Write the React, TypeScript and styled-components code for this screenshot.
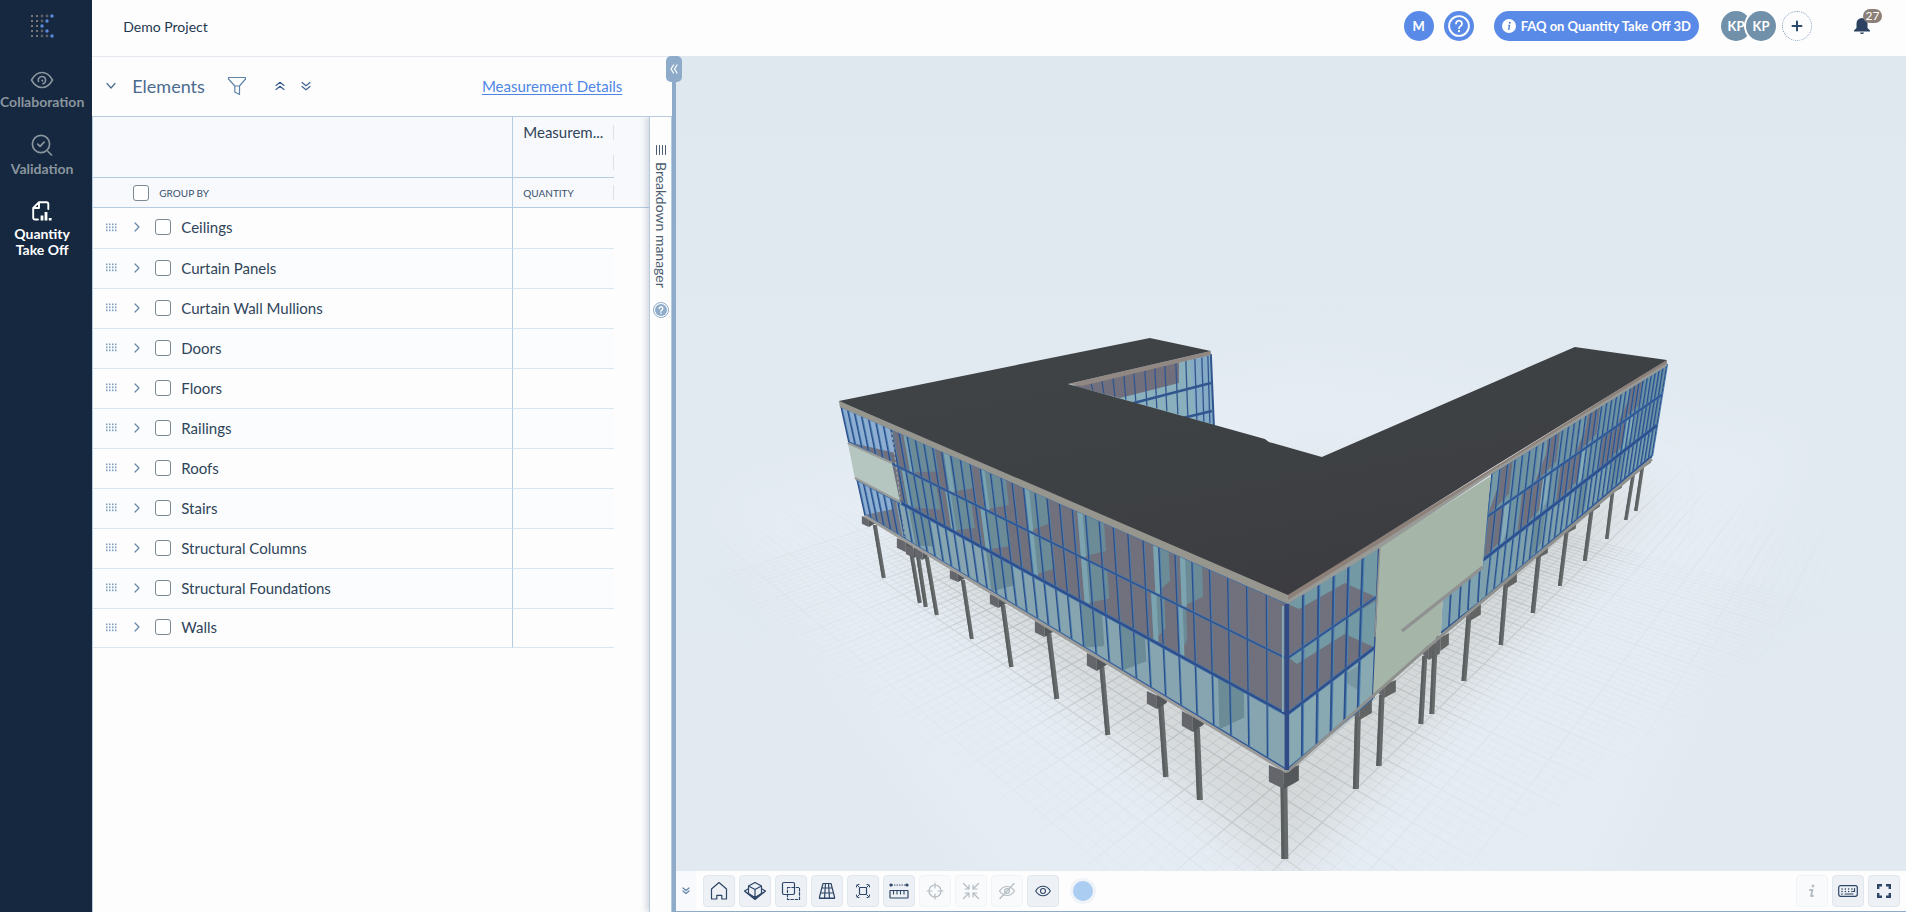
import React from "react";
import styled, { createGlobalStyle, css } from "styled-components";

const GlobalStyle = createGlobalStyle`
  *, *::before, *::after { box-sizing: border-box; }
  html, body, #root { height: 100%; }
  body {
    margin: 0;
    background: #fdfdfe;
    color: #2f4459;
    font-family: Lato, "Noto Sans", sans-serif;
    font-size: 15px;
  }
  button { font: inherit; color: inherit; padding: 0; border: 0; background: none; cursor: pointer; }
  svg { display: block; }
`;

/* ---------- shell ---------- */

const Shell = styled.div`
  display: flex;
  height: 100vh;
`;

const Sidebar = styled.nav`
  flex: 0 0 92px;
  display: flex;
  flex-direction: column;
  align-items: center;
  padding: 14px 8px 0 0;
  background: #152840;
`;

const NavLink = styled.a<{ $active?: boolean; $gap: number }>`
  display: flex;
  flex-direction: column;
  align-items: center;
  gap: 5px;
  margin-top: ${(p) => p.$gap}px;
  color: ${(p) => (p.$active ? "#ffffff" : "#8a959d")};
  font-size: 14px;
  font-weight: 700;
  line-height: 16px;
  text-align: center;
  text-decoration: none;
`;

const Main = styled.div`
  flex: 1;
  min-width: 0;
  display: flex;
  flex-direction: column;
`;

/* ---------- top bar ---------- */

const TopBar = styled.header`
  flex: 0 0 57px;
  display: flex;
  align-items: center;
  padding: 0 36px 4px 31px;
  border-bottom: 1px solid #e3e9ef;
`;

const ProjectName = styled.h1`
  flex: 1;
  margin: 0;
  font-size: 14px;
  font-weight: 400;
  color: #22384f;
`;

const RoundButton = styled.button`
  width: 30px;
  height: 30px;
  margin-right: 10px;
  display: grid;
  place-items: center;
  border-radius: 50%;
  background: #5a8ae8;
  color: #fff;
  font-size: 13px;
  font-weight: 700;
`;

const FaqButton = styled.button`
  display: flex;
  align-items: center;
  gap: 5px;
  height: 30px;
  margin: 0 22px 0 10px;
  padding: 0 8px;
  border-radius: 15px;
  background: #5a8ae8;
  color: #fff;
  font-size: 13px;
  font-weight: 700;
  white-space: nowrap;
`;

const Avatars = styled.div`
  display: flex;
  margin-right: 6px;
`;

const Avatar = styled.span`
  width: 30px;
  height: 30px;
  display: grid;
  place-items: center;
  border-radius: 50%;
  background: #7190a9;
  color: #fff;
  font-size: 13px;
  font-weight: 700;
  & + & {
    margin-left: -5px;
    box-shadow: 0 0 0 2px #fff;
  }
`;

const AddButton = styled.button`
  width: 30px;
  height: 30px;
  display: grid;
  place-items: center;
  border: 1px dotted #7f9cb8;
  border-radius: 50%;
`;

const BellButton = styled.button`
  position: relative;
  width: 16px;
  height: 18px;
  margin-left: 42px;
`;

const BellBadge = styled.span`
  position: absolute;
  top: -8px;
  left: 9px;
  width: 19px;
  border-radius: 7px;
  background: #8b7f77;
  color: #fff;
  font-size: 12px;
  line-height: 14px;
  text-align: center;
`;

/* ---------- elements panel ---------- */

const Workspace = styled.div`
  flex: 1;
  min-height: 0;
  display: flex;
`;

const Panel = styled.section`
  flex: 0 0 580px;
  display: flex;
  flex-direction: column;
`;

const PanelHead = styled.div`
  display: flex;
  align-items: center;
  height: 60px;
  padding: 0 50px 2px 13px;
  border-bottom: 1px solid #b4cbe0;
`;

const PanelTitle = styled.h2`
  margin: 0 22px 0 15px;
  font-size: 18px;
  font-weight: 400;
  color: #4b6b8e;
`;

const IconButton = styled.button<{ $gap?: number }>`
  margin-left: ${(p) => p.$gap ?? 0}px;
`;

const DetailsLink = styled.a`
  margin-left: auto;
  color: #4f86e6;
  font-size: 15px;
  text-underline-offset: 2px;
`;

const PanelBody = styled.div`
  flex: 1;
  display: flex;
`;

const TableArea = styled.div`
  flex: 1;
  min-width: 0;
  border-left: 1px solid #b4cbe0;
`;

const Table = styled.table`
  width: 100%;
  table-layout: fixed;
  border-collapse: separate;
  border-spacing: 0;
  col:nth-child(1) { width: 420px; }
  col:nth-child(2) { width: 101px; }
`;

const HeadRow = styled.tr<{ $tall?: boolean }>`
  height: ${(p) => (p.$tall ? 61 : 30)}px;
  background: #f7f9fc;
  th {
    padding: 0;
    border-bottom: 1px solid #b4cbe0;
    font-weight: 400;
    text-align: left;
    vertical-align: top;
  }
  th:first-child { border-right: 1px solid #b4cbe0; }
  ${(p) => p.$tall && css`th:last-child { border-bottom: 0; }`}
`;

const HeadCell = styled.div<{ $small?: boolean }>`
  display: flex;
  align-items: center;
  height: ${(p) => (p.$small ? 29 : 30)}px;
  padding-left: 10px;
  font-size: ${(p) => (p.$small ? 10 : 15)}px;
  color: ${(p) => (p.$small ? "#37506b" : "#2f4459")};
  &::after {
    content: "";
    width: 1px;
    height: 15px;
    margin-left: auto;
    background: #dce2e8;
  }
`;

const GroupByLabel = styled.label`
  display: flex;
  align-items: center;
  gap: 10px;
  height: 29px;
  padding-left: 40px;
  font-size: 10px;
  color: #37506b;
`;

const CheckBox = styled.input.attrs({ type: "checkbox" })`
  appearance: none;
  width: 16px;
  height: 16px;
  margin: 0;
  border: 1px solid #7b8993;
  border-radius: 3px;
  background: #fff;
`;

const ElementRow = styled.tr`
  height: 40px;
  &:first-child { height: 41px; }
  &:last-child { height: 39px; }
  &:nth-child(even) td:not(:last-child) { background: #fafcfd; }
  td { padding: 0 0 2px; }
  td:not(:last-child) { border-bottom: 1px solid #d8e6f0; }
  td:first-child { border-right: 1px solid #b4cbe0; }
`;

const RowContent = styled.div`
  display: flex;
  align-items: center;
  padding-left: 13px;
`;

const RowLabel = styled.label`
  display: flex;
  align-items: center;
  gap: 10px;
  margin-left: 15px;
  line-height: 20px;
`;

const Dock = styled.aside`
  position: relative;
  flex: 0 0 23px;
  display: flex;
  flex-direction: column;
  align-items: center;
  padding-top: 28px;
  border: solid #b4cbe0;
  border-width: 0 1px;
  background: #fdfdfe;
  box-shadow: -3px 0 6px rgba(90, 110, 130, 0.25);
  clip-path: inset(0 0 0 -12px);
`;

const DockLabel = styled.span`
  writing-mode: vertical-rl;
  margin: 7px 0 14px;
  font-size: 14px;
  line-height: 20px;
  color: #4a5c6e;
`;

const Splitter = styled.div`
  position: relative;
  flex: 0 0 4px;
  background: #8eacc9;
`;

const CollapseButton = styled.button`
  position: absolute;
  z-index: 1;
  top: -1px;
  left: -6px;
  width: 16px;
  height: 26px;
  display: grid;
  place-items: center;
  border-radius: 5px;
  background: #8eacc9;
`;

/* ---------- viewer ---------- */

const Viewer = styled.section`
  flex: 1;
  min-width: 0;
  display: flex;
  flex-direction: column;
`;

const Canvas = styled.div`
  flex: 1;
  min-height: 0;
  overflow: hidden;
  background: #e1e9f0;
  svg { width: 100%; height: 100%; }
`;

const ToolBar = styled.div`
  flex: 0 0 41px;
  display: flex;
  align-items: center;
  gap: 4px;
  padding-right: 6px;
  border-bottom: 1px solid #8eacc9;
  background: #fdfdfe;
`;

const ToolBarToggle = styled.button`
  align-self: stretch;
  width: 20px;
  margin-right: 3px;
  display: grid;
  place-items: center;
  background: #f7f9fc;
`;

const ToolButton = styled.button`
  width: 32px;
  height: 32px;
  display: grid;
  place-items: center;
  border: 1px solid #e0e7ed;
  border-radius: 4px;
  background: #edf1f5;
  color: #2d4566;
  &:disabled {
    border-color: #f1f4f7;
    background: #f9fafc;
    color: #b3bcc2;
  }
`;

const ColorButton = styled.button`
  width: 26px;
  height: 26px;
  margin: 0 auto 0 7px;
  border: 3px solid #f0f4f8;
  border-radius: 50%;
  background: #abcdf2;
`;

/* ---------- icons ---------- */

type IconProps = { w: number; h?: number; stroke?: string; sw?: number; children: React.ReactNode };
const Icon = ({ w, h = w, stroke = "currentColor", sw = 1.2, children }: IconProps) => (
  <svg width={w} height={h} viewBox={`0 0 ${w} ${h}`} fill="none" stroke={stroke} strokeWidth={sw} strokeLinecap="round" strokeLinejoin="round" aria-hidden="true">
    {children}
  </svg>
);

const Logo = () => (
  <svg width="24" height="24" viewBox="0 0 24 24" aria-label="Home">
    {[0, 1, 2, 3, 4].map((r) =>
      [0, 1, 2, 3, 4].map((c) => {
        const edge = [4, 3, 2, 3, 4][r];
        if (c > edge) return null;
        const fill = c === edge ? "#5a8ad8" : c < 2 ? "#9b9188" : "#5c6068";
        return <circle key={`${r}${c}`} cx={2 + c * 5} cy={2 + r * 5} r={c === edge ? 1.7 : c < 2 ? 1 : 1.4} fill={fill} />;
      })
    )}
  </svg>
);

const EyeNav = () => (
  <Icon w={24} h={18} sw={1.6}>
    <path d="M1.500 9C4 4.500 7.700 1.500 12 1.500S20 4.500 22.500 9C20 13.500 16.300 16.500 12 16.500S4 13.500 1.500 9Z" />
    <path d="M8.500 10.500a3.700 3.700 0 1 1 4.500 2.200M12 9.300l.6.600" />
  </Icon>
);

const ValidationNav = () => (
  <Icon w={22} h={22} sw={1.7}>
    <circle cx="10" cy="10" r="8.600" />
    <path d="m17 17.500 3.500 3.500M6.800 10.200l2.300 2.200 4-4.200" />
  </Icon>
);

const TakeOffNav = () => (
  <Icon w={20} h={20} sw={1.9}>
    <path d="M6 18.500H3a1.800 1.800 0 0 1-1.800-1.800V7L7 1.200h7.500A1.800 1.800 0 0 1 16.300 3v5M7 1.500V7H1.500" />
    <path d="M10 14.500v5M14 11v8.500M18.200 17v2.500" strokeWidth="2.800" strokeLinecap="butt" />
  </Icon>
);

const DragDots = () => (
  <svg width="11" height="9" viewBox="0 0 11 9" fill="#7f9fbe" aria-hidden="true">
    {[0, 1, 2].map((r) => [0, 1, 2, 3].map((c) => <rect key={`${r}${c}`} x={c * 3} y={r * 3 + 0.5} width="1.500" height="1.700" />))}
  </svg>
);

const DoubleDown = ({ c = "#3f6290", s = 10 }: { c?: string; s?: number }) => (
  <Icon w={s} stroke={c}>
    <path d={s === 10 ? "m1 1.500 4 3.200 4-3.200M1 5.500l4 3.200 4-3.200" : "m1 1 3 2.500L7 1M1 4l3 2.500L7 4"} />
  </Icon>
);

const HelpRing = ({ d }: { d: number }) => (
  <svg width={d} height={d} viewBox="0 0 20 20" aria-hidden="true">
    <circle cx="10" cy="10" r="9" fill="none" stroke="#fff" strokeWidth="1.700" />
    <path d="M7.300 7.800a2.700 2.700 0 1 1 4.100 2.300c-.9.600-1.400 1-1.400 2" fill="none" stroke="#fff" strokeWidth="1.600" strokeLinecap="round" />
    <circle cx="10" cy="14.700" r="1" fill="#fff" />
  </svg>
);

/* ---------- building model ---------- */

type Pt = [number, number];
const pts = (list: Pt[]) => list.map((p) => p.map((n) => n.toFixed(1)).join(",")).join(" ");
const mix = (a: Pt, b: Pt, t: number): Pt => [a[0] + (b[0] - a[0]) * t, a[1] + (b[1] - a[1]) * t];

type Patch = { f: number; a: number; b: number; c: string; slope?: number };
type FaceProps = {
  tl: Pt; tr: Pt; br: Pt; bl: Pt;
  stops: number[];
  base: [string, string, string];
  patches?: Patch[];
  pane: number;
  children?: React.ReactNode;
};

/* A curtain-wall face: three glazed floors, interior patches, then mullions at the given stops. */
const Face = ({ tl, tr, br, bl, stops, base, patches = [], pane, children }: FaceProps) => {
  const at = (t: number, v: number): Pt => mix(mix(tl, tr, t), mix(bl, br, t), v);
  return (
    <g>
      {base.map((c, f) => (
        <polygon key={f} points={pts([at(0, f / 3), at(1, f / 3), at(1, (f + 1) / 3), at(0, (f + 1) / 3)])} fill={c} />
      ))}
      {patches.map((p, i) => (
        <polygon
          key={i}
          points={pts([at(p.a, p.f / 3), at(p.b, p.f / 3), at(p.b, (p.f + 1 - (p.slope ?? 0)) / 3), at(p.a, (p.f + 1) / 3)])}
          fill={p.c}
        />
      ))}
      {children}
      {stops.map((t, i) => {
        const p = at(t, 0);
        const q = at(t, 1);
        return (
          <g key={i}>
            <line x1={p[0] + pane * 0.7} y1={p[1]} x2={q[0] + pane * 0.7} y2={q[1]} stroke="#4b83b3" strokeWidth={pane * 0.8} />
            <line x1={p[0]} y1={p[1]} x2={q[0]} y2={q[1]} stroke="#2d4f8c" strokeWidth={pane} />
          </g>
        );
      })}
      {[0, 1 / 3, 2 / 3, 1].map((v, i) => {
        const p = at(0, v);
        const q = at(1, v);
        return (
          <g key={i}>
            <line x1={p[0]} y1={p[1]} x2={q[0]} y2={q[1]} stroke="#3f73ab" strokeWidth={i === 2 ? 3.6 : 2.6} />
            <line x1={p[0]} y1={p[1]} x2={q[0]} y2={q[1]} stroke="#2f4d8a" strokeWidth={i === 2 ? 2.2 : 1.2} />
          </g>
        );
      })}
    </g>
  );
};

/* Mullion stops whose spacing shrinks with distance from the near edge. */
const stopsFrom = (length: number, near: number, far: number, fromEnd: boolean) => {
  const out: number[] = [0];
  let d = 0;
  while (d < length) {
    const k = Math.sqrt(near) + (Math.sqrt(far) - Math.sqrt(near)) * (d / length);
    d += k * k;
    if (d < length - far / 2) out.push(d / length);
  }
  out.push(1);
  return fromEnd ? out.map((t) => 1 - t).reverse() : out;
};

const leftStops = stopsFrom(445, 20.5, 6.5, true);
const cornerStops = stopsFrom(92, 16, 13.5, false);
const rightStops = stopsFrom(174, 8, 3.6, false);

const TEAL = "#6b8c97";
const PALE = "#7ba3b0";
const SKY = "#8baed2";
const FLOOR = "#70717d";

/* Rooms seen through the glass: a shaded wall, then a pale partition edge. */
const rooms = (f: number, list: [number, number][]): Patch[] =>
  list.flatMap(([a, b]) => [
    { f, a, b, c: TEAL, slope: 0.4 },
    { f, a, b: a + 0.012, c: PALE, slope: 0.05 },
  ]);
const leftPatches: Patch[] = [
  { f: 0, a: 0, b: 0.11, c: SKY, slope: 0.35 },
  { f: 2, a: 0, b: 0.09, c: "#747985" },
  { f: 2, a: 0, b: 0.08, c: SKY, slope: 0.7 },
  { f: 2, a: 0.12, b: 0.17, c: TEAL, slope: 0.3 },
  { f: 2, a: 0.3, b: 0.36, c: TEAL, slope: 0.5 },
  { f: 2, a: 0.52, b: 0.57, c: TEAL, slope: 0.3 },
  { f: 2, a: 0.61, b: 0.67, c: TEAL, slope: 0.5 },
  { f: 2, a: 0.84, b: 0.9, c: TEAL, slope: 0.5 },
  ...rooms(0, [[0.14, 0.21], [0.23, 0.29], [0.31, 0.37], [0.41, 0.46], [0.53, 0.59], [0.7, 0.735], [0.76, 0.81]]),
  ...rooms(1, [[0.12, 0.2], [0.22, 0.28], [0.3, 0.36], [0.41, 0.46], [0.53, 0.59], [0.69, 0.72], [0.75, 0.77]]),
];
const rightPatches: Patch[] = [
  ...[0.0, 0.27, 0.5, 0.74].map((a) => ({ f: 0, a, b: a + 0.12, c: FLOOR, slope: 0.2 })),
  ...[0.0, 0.2, 0.42, 0.66].map((a) => ({ f: 1, a, b: a + 0.13, c: FLOOR, slope: 0.2 })),
  ...[0.0, 0.27, 0.5, 0.74].map((a) => ({ f: 0, a, b: a + 0.13, c: "#7599a5", slope: 0.6 })).map((p) => ({ ...p, b: p.a + 0.05 })),
  ...[0.1, 0.32, 0.54, 0.8].map((a) => ({ f: 1, a, b: a + 0.04, c: "#85abb8", slope: 0.3 })),
  ...[0.3, 0.55, 0.75].map((a) => ({ f: 2, a, b: a + 0.06, c: TEAL, slope: 0.2 })),
];

/* Each column: cap box (x1, y1, x2, y2), then post top, post foot and width. */
const leftColumns: number[][] = [
  [862, 516, 876, 527, 875, 525, 884, 578, 4], [897, 538, 914, 552, 911, 550, 920, 603, 4],
  [906, 545, 922, 558, 918, 555, 926, 607, 4], [915, 546, 930, 560, 927, 557, 937, 615, 4],
  [950, 570, 966, 582, 963, 580, 972, 639, 4], [990, 594, 1007, 608, 1003, 605, 1011.5, 667, 4.5],
  [1035, 621, 1054, 637, 1049, 634, 1057, 699, 5], [1087, 653, 1107, 671, 1102, 667, 1108, 735, 5],
  [1147, 691, 1167, 709, 1161, 705, 1166, 777, 5.5], [1182, 711, 1204, 732, 1197, 728, 1200, 800, 6],
  [1269, 765, 1299, 789, 1284, 784, 1285, 859, 7],
];
const rightColumns: number[][] = [
  [1353, 700, 1372, 720, 1358, 716, 1356, 789, 6], [1378, 680, 1396, 698, 1382, 695, 1379, 766, 5.5],
  [1423, 641, 1440, 660, 1425, 656, 1421, 724, 5], [1436, 633, 1449, 651, 1435, 650, 1432, 714, 5],
  [1464, 602, 1481, 621, 1469, 617, 1464, 681, 5], [1502, 571, 1517, 588, 1506, 584, 1501, 645, 4.5],
  [1533, 544, 1548, 558, 1539, 555, 1533, 613, 4.5], [1563, 520, 1576, 533, 1567, 530, 1560, 586, 4],
  [1590, 498, 1600, 511, 1592, 508, 1585, 561, 4], [1611, 480, 1622, 492, 1613, 490, 1607, 539, 3.5],
  [1632, 462, 1642, 474, 1634, 471, 1626, 520, 3.5], [1641, 455, 1651, 467, 1643, 464, 1636, 511, 3.5],
];

const Column = ({ c, right }: { c: number[]; right?: boolean }) => {
  const [x1, y1, x2, y2, px, py, fx, fy, w] = c;
  const h = y2 - y1;
  const mid = right ? x1 + (x2 - x1) * 0.35 : x1 + (x2 - x1) * 0.5;
  return (
    <g>
      <line x1={px} y1={py} x2={fx} y2={fy} stroke="#666a6a" strokeWidth={w} />
      <line x1={px - w / 4} y1={py} x2={fx - w / 4} y2={fy} stroke="#585d5f" strokeWidth={w / 2.5} />
      <polygon points={pts([[x1, y1], [mid, y1 + h * 0.25], [mid, y2], [x1, y2 - h * 0.3]])} fill="#65656c" />
      <polygon points={pts([[mid, y1 + h * 0.25], [x2, y1], [x2, y2 - h * 0.35], [mid, y2]])} fill={right ? "#616463" : "#55585a"} />
    </g>
  );
};

const HORIZON = 155;
const gridLines = (vx: number) =>
  Array.from({ length: 150 }, (_, i) => {
    const x = 1285 + (i - 75) * 19;
    const end = mix([vx, HORIZON], [x, 859], 1.15);
    const start = mix([vx, HORIZON], [x, 859], 0.3);
    return <line key={i} x1={start[0]} y1={start[1]} x2={end[0]} y2={end[1]} strokeWidth={i % 5 === 0 ? 1.3 : 0.7} />;
  });

const Building = () => (
  <svg viewBox="676 57 1230 814" preserveAspectRatio="xMidYMid slice" role="img" aria-label="3D model of the building">
    <defs>
      <filter id="soft" x="-30%" y="-30%" width="160%" height="160%"><feGaussianBlur stdDeviation="24" /></filter>
      <linearGradient id="sky" x1="0" y1="0" x2="0" y2="1">
        <stop offset="0" stopColor="#e0e8ef" />
        <stop offset="0.400" stopColor="#e2eaf1" />
        <stop offset="1" stopColor="#e2e9f1" />
      </linearGradient>
      <linearGradient id="roof" x1="0" y1="0" x2="0.600" y2="1">
        <stop offset="0" stopColor="#404446" />
        <stop offset="0.550" stopColor="#3e4144" />
        <stop offset="1" stopColor="#3c3c40" />
      </linearGradient>
      <mask id="gridFade" maskUnits="userSpaceOnUse" x="676" y="57" width="1230" height="814">
        <polygon points="700,560 1285,1000 1860,560 1660,480 870,500" fill="#1c1c1c" filter="url(#soft)" />
        <polygon points="870,560 1285,880 1660,500 1300,560" fill="#c4c4c4" filter="url(#soft)" />
      </mask>
    </defs>
    <rect x="676" y="57" width="1230" height="814" fill="url(#sky)" />
    <polygon points="720,500 1000,900 1600,900 1800,440 1300,360" fill="#e5ecf3" filter="url(#soft)" />
    <polygon points="900,540 1285,870 1650,490 1300,480" fill="#d4d8d9" filter="url(#soft)" />
    <g stroke="#b4babd" mask="url(#gridFade)">
      {gridLines(268)}
      {gridLines(2004)}
    </g>

    {leftColumns.map((c, i) => <Column key={i} c={c} />)}
    {rightColumns.map((c, i) => <Column key={i} c={c} right />)}

    {/* courtyard glazing */}
    <polygon points="1070,386 1211,354 1214,428" fill="#8bb0bd" />
    <polygon points="1074,386 1179,362 1179,383 1120,398" fill="#706f7b" />
    <polygon points="1190,359 1211,354 1213,428 1196,420" fill="#84aac6" />
    <g stroke="#31568f" strokeWidth="1.300">
      {[1091, 1102, 1113, 1124, 1134, 1145, 1155, 1165, 1176, 1186, 1195, 1202, 1208].map((x) => (
        <line key={x} x1={x} y1={386 - (x - 1075) * 0.225} x2={x + 2} y2={384 + (x - 1068) * 0.281} />
      ))}
      <path d="M1130 404 1211 383M1183 418 1212 411" strokeWidth="2.400" />
      <path d="M1211 354 1214 425" strokeWidth="2" />
    </g>

    {/* long left facade */}
    <Face tl={[841, 406]} tr={[1287, 603]} br={[1287, 770]} bl={[865, 515]} stops={leftStops} base={[FLOOR, FLOOR, "#86a5b0"]} patches={leftPatches} pane={1.3} />
    <polygon points="848,443 892,463 900,501 855,478" fill="#b5c6c1" />
    <path d="M848 443 892 463M855 478 900 502" stroke="#9a9c99" strokeWidth="2" fill="none" />
    <path d="M892 432 905 537" stroke="#9aa4a8" strokeWidth="1.200" strokeDasharray="3 2" />

    {/* short facade at the near corner */}
    <Face tl={[1287, 603]} tr={[1379, 546]} br={[1373, 698]} bl={[1287, 770]} stops={cornerStops} base={[FLOOR, FLOOR, "#88a8b2"]} pane={1.8}>
      <polygon points="1288,604 1345,568 1345,583 1299,609" fill="#7299a4" />
      <polygon points="1345,568 1379,546 1376,597 1345,583" fill="#7299a4" />
      <polygon points="1288,657 1345,620 1345,634 1297,664" fill="#7299a4" />
      <polygon points="1345,620 1377,600 1374,647 1345,634" fill="#7299a4" />
      <polygon points="1345,674 1360,665 1358,690 1345,682" fill="#7798a3" />
    </Face>

    {/* far right facade */}
    <Face tl={[1492, 473]} tr={[1667, 364]} br={[1652, 456]} bl={[1478, 604]} stops={rightStops} base={["#6f93a0", "#6f93a0", "#7da0ac"]} patches={rightPatches} pane={1.2} />
    <polygon points="1443,597 1484,565 1480,602 1441,633" fill="#7fa2b1" />
    <g stroke="#2f5690" strokeWidth="1.800">
      <path d="M1451 591l-2 36M1461 584l-2 34M1470 576l-2 34M1480 569l-2 33M1441 633 1480 602" />
    </g>

    <polygon points="1380,547 1491,476 1483,566 1443,597 1441,633 1373,698" fill="#a5b5a8" />
    <path d="M1402 631 1483 567" stroke="#8f9290" strokeWidth="3.500" fill="none" />
    <path d="M1380 547 1375 637" stroke="#8f9290" strokeWidth="1.500" fill="none" />

    {/* slab edges */}
    <path d="M865 516 1287 772" stroke="#9c9d9b" strokeWidth="3" fill="none" />
    <path d="M1287 772 1441 636 1652 459" stroke="#8f918e" strokeWidth="3" fill="none" />
    <path d="M1287 604V770" stroke="#2f4a86" strokeWidth="4.500" />
    <path d="M1283 606V712" stroke="#86aebb" strokeWidth="1.800" />

    {/* roof */}
    <polygon points="839,401 1288,594 1288,604 840,407" fill="#96968f" />
    <polygon points="1288,594 1380,538 1490,470 1667,360 1667,366 1492,474 1380,548 1288,604" fill="#979a97" />
    <polygon points="1288,594 1380,538 1490,470 1667,360 1667,363 1492,471 1380,543 1288,600" fill="#8d8078" />
    <polygon points="1068,384 1211,351 1211,355 1082,386" fill="#918883" />
    <polygon points="839,401 1150,338 1211,351 1068,384 1265,439 1269,442 1322,457 1575,347 1667,360 1490,469 1380,538 1288,595" fill="url(#roof)" />
  </svg>
);

/* ---------- page ---------- */

const groups = [
  "Ceilings", "Curtain Panels", "Curtain Wall Mullions", "Doors", "Floors", "Railings",
  "Roofs", "Stairs", "Structural Columns", "Structural Foundations", "Walls",
];

type Tool = { name: string; disabled?: boolean; icon: React.ReactNode };
const tools: Tool[] = [
  { name: "Home", icon: <Icon w={20}><path d="M2.500 8 10 1.500 17.500 8v10H12.800v-3.600h-5V18H2.500Z" /></Icon> },
  { name: "Rotate", icon: <Icon w={24} h={20}><path d="m12 1.500 6.500 3.500v7.500L12 16.500 5.500 12.500V5ZM5.500 5 12 8.500 18.500 5M12 8.500v8" /><path d="M5 8 1.500 10 12 17.500 22.500 10 19 8M2 10.500 12 18.500 22 10.500" /></Icon> },
  { name: "Selection", icon: <Icon w={20}><rect x="1.500" y="1.500" width="12" height="12" rx="1.500" /><path d="M6.500 6.500h12v12h-12Z" strokeDasharray="2.500 1.800" /></Icon> },
  { name: "Perspective", icon: <Icon w={18}><path d="M5 1.500h8L16.500 15v1.500H1.500V15ZM3.800 6h10.400M2.500 11h13M7.500 1.500 6.500 16.500M10.500 1.500l1 15M1.500 16h15" /></Icon> },
  { name: "Fit", icon: <Icon w={16}><rect x="4.500" y="4.500" width="7" height="7" rx="0.500" /><path d="M1.500 4V2.800M4 1.500H2.800M2 2l1.800 1.800M12 1.500h1.200M14.500 4V2.800M14 2l-1.800 1.800M1.500 12v1.200M4 14.500H2.800M2 14l1.800-1.800M14.500 12v1.200M12 14.500h1.200M14 14l-1.800-1.800" strokeWidth="1" /></Icon> },
  { name: "Measure", icon: <Icon w={20} h={16}><rect x="1" y="7.500" width="18" height="7.500" rx="0.500" /><path d="M4.500 8v3M8 8v3M11.500 8v3M15 8v3" strokeWidth="1.100" /><path d="M3 2h14" strokeDasharray="0.500 2" /><circle cx="2" cy="2" r="1" fill="currentColor" /><circle cx="18" cy="2" r="1" fill="currentColor" /></Icon> },
  { name: "Focus", disabled: true, icon: <Icon w={18}><circle cx="9" cy="9" r="6" /><path d="M9 1v5M9 12v5M1 9h5M12 9h5" /></Icon> },
  { name: "Collapse", disabled: true, icon: <Icon w={18}><path d="m1.500 1.500 5.500 5.500M7 3v4H3M16.500 1.500 11 7M11 3v4h4M1.500 16.500 7 11M3 11h4v4M16.500 16.500 11 11M15 11h-4v4" /></Icon> },
  { name: "Hide", disabled: true, icon: <Icon w={18}><path d="M1.500 9C3.500 6 6 4.500 9 4.500S14.500 6 16.500 9C14.500 12 12 13.500 9 13.500S3.500 12 1.500 9Z" /><circle cx="9" cy="9" r="2.300" /><path d="M16 1.500 2 16.500" /></Icon> },
  { name: "Show", icon: <Icon w={16} h={12} sw={1.1}><path d="M.7 6C2.500 2.800 5 1.300 8 1.300S13.500 2.800 15.300 6C13.500 9.200 11 10.700 8 10.700S2.500 9.200.7 6Z" /><circle cx="8" cy="6" r="2.500" /></Icon> },
];

const viewTools: Tool[] = [
  { name: "Information", disabled: true, icon: <Icon w={8} h={14}><circle cx="5" cy="2" r="0.800" fill="currentColor" /><path d="M2 6h2.500L3 12h2" strokeWidth="1.800" /></Icon> },
  { name: "Keyboard shortcuts", icon: <Icon w={20} h={12}><rect x="0.700" y="0.700" width="18.600" height="10.600" rx="2" /><path d="M4 4h10M4 6.500h10" strokeDasharray="0.100 3.200" strokeWidth="1.500" /><path d="M3.500 9h1M7 9h8M16.500 3.500v3h-1.500" strokeWidth="1.200" /></Icon> },
  { name: "Full screen", icon: <Icon w={14} sw={2.4}><path d="M1.200 5V1.200H5M9 1.200h3.800V5M12.800 9v3.800H9M5 12.800H1.200V9" strokeLinecap="butt" strokeLinejoin="miter" /></Icon> },
];

const ToolSet = ({ items }: { items: Tool[] }) => (
  <>
    {items.map((t) => (
      <ToolButton key={t.name} aria-label={t.name} disabled={t.disabled}>{t.icon}</ToolButton>
    ))}
  </>
);

export default function App() {
  return (
    <>
      <GlobalStyle />
      <Shell>
        <Sidebar>
          <Logo />
          <NavLink href="#collaboration" $gap={33}><EyeNav />Collaboration</NavLink>
          <NavLink href="#validation" $gap={24}><ValidationNav />Validation</NavLink>
          <NavLink href="#take-off" $gap={24} $active><TakeOffNav /><span>Quantity<br />Take Off</span></NavLink>
        </Sidebar>
        <Main>
          <TopBar>
            <ProjectName>Demo Project</ProjectName>
            <RoundButton aria-label="M profile">M</RoundButton>
            <RoundButton aria-label="Help"><HelpRing d={22} /></RoundButton>
            <FaqButton>
              <svg width="14" height="14" viewBox="0 0 14 14" aria-hidden="true">
                <circle cx="7" cy="7" r="7" fill="#fff" />
                <circle cx="7.800" cy="3.800" r="1" fill="#4a78d0" />
                <path d="M6.300 6.300h1.200l-.8 3.900h1" fill="none" stroke="#4a78d0" strokeWidth="1.300" />
              </svg>
              FAQ on Quantity Take Off 3D
            </FaqButton>
            <Avatars><Avatar>KP</Avatar><Avatar>KP</Avatar></Avatars>
            <AddButton aria-label="Add person"><Icon w={12} stroke="#2f4a6b" sw={2}><path d="M6 1.500v9M1.500 6h9" /></Icon></AddButton>
            <BellButton aria-label="Notifications">
              <svg width="16" height="18" viewBox="0 0 16 18" fill="#2c4260" aria-hidden="true">
                <path d="M8 1a5.500 5.500 0 0 0-5.500 5.500V11L0 13.500V14.500h16v-1L13.500 11V6.500A5.500 5.500 0 0 0 8 1ZM6 15.500a2 1.600 0 0 0 4 0Z" />
              </svg>
              <BellBadge>27</BellBadge>
            </BellButton>
          </TopBar>
          <Workspace>
            <Panel>
              <PanelHead>
                <IconButton aria-label="Collapse elements"><Icon w={12} h={8} stroke="#4b6b8e"><path d="m2 1.500 4 4.500 4-4.500" /></Icon></IconButton>
                <PanelTitle>Elements</PanelTitle>
                <IconButton aria-label="Filter">
                  <Icon w={20} stroke="#5f84a8"><path d="M1.500 1.500h17v1.500L12.500 10v8.500L7.800 16v-6L1.500 3ZM7.800 10h4.700" /></Icon>
                </IconButton>
                <IconButton aria-label="Collapse all" $gap={28}><Icon w={10} stroke="#3f6290"><path d="m1 4.500 4-3.200 4 3.200M1 8.500l4-3.200 4 3.200" /></Icon></IconButton>
                <IconButton aria-label="Expand all" $gap={16}><DoubleDown /></IconButton>
                <DetailsLink href="#details">Measurement Details</DetailsLink>
              </PanelHead>
              <PanelBody>
                <TableArea>
                  <Table>
                    <colgroup><col /><col /><col /></colgroup>
                    <thead>
                      <HeadRow $tall>
                        <th />
                        <th>
                          <HeadCell>Measurem...</HeadCell>
                          <HeadCell />
                        </th>
                        <th />
                      </HeadRow>
                      <HeadRow>
                        <th><GroupByLabel><CheckBox />GROUP BY</GroupByLabel></th>
                        <th><HeadCell $small>QUANTITY</HeadCell></th>
                        <th />
                      </HeadRow>
                    </thead>
                    <tbody>
                      {groups.map((g) => (
                        <ElementRow key={g}>
                          <td>
                            <RowContent>
                              <DragDots />
                              <IconButton aria-label={`Expand ${g}`} $gap={17}>
                                <Icon w={6} h={10} stroke="#6488ab"><path d="m1 1 4 4-4 4" /></Icon>
                              </IconButton>
                              <RowLabel><CheckBox />{g}</RowLabel>
                            </RowContent>
                          </td>
                          <td />
                          <td />
                        </ElementRow>
                      ))}
                    </tbody>
                  </Table>
                </TableArea>
                <Dock>
                  <Icon w={12} h={10} stroke="#4a5c6e"><path d="M1.500.500v9M4.500.500v9M7.500.500v9M10.500.500v9" strokeWidth="1" /></Icon>
                  <DockLabel>Breakdown manager</DockLabel>
                  <svg width="16" height="16" viewBox="0 0 16 16" aria-hidden="true">
                    <circle cx="8" cy="8" r="7.500" fill="#fff" stroke="#8eacc9" />
                    <circle cx="8" cy="8" r="6" fill="#8eacc9" />
                    <path d="M6.200 6.500a1.800 1.800 0 1 1 2.700 1.600c-.6.400-.9.600-.9 1.200M8 11v.4" fill="none" stroke="#fff" strokeWidth="1.300" strokeLinecap="round" />
                  </svg>
                </Dock>
              </PanelBody>
            </Panel>
            <Splitter>
              <CollapseButton aria-label="Collapse panel"><Icon w={8} h={10} stroke="#fff"><path d="M3.500 1 1 5l2.500 4M7 1 4.500 5 7 9" /></Icon></CollapseButton>
            </Splitter>
            <Viewer>
              <Canvas><Building /></Canvas>
              <ToolBar>
                <ToolBarToggle aria-label="Hide toolbar"><DoubleDown c="#5f84a8" s={8} /></ToolBarToggle>
                <ToolSet items={tools} />
                <ColorButton aria-label="Highlight colour" />
                <ToolSet items={viewTools} />
              </ToolBar>
            </Viewer>
          </Workspace>
        </Main>
      </Shell>
    </>
  );
}
